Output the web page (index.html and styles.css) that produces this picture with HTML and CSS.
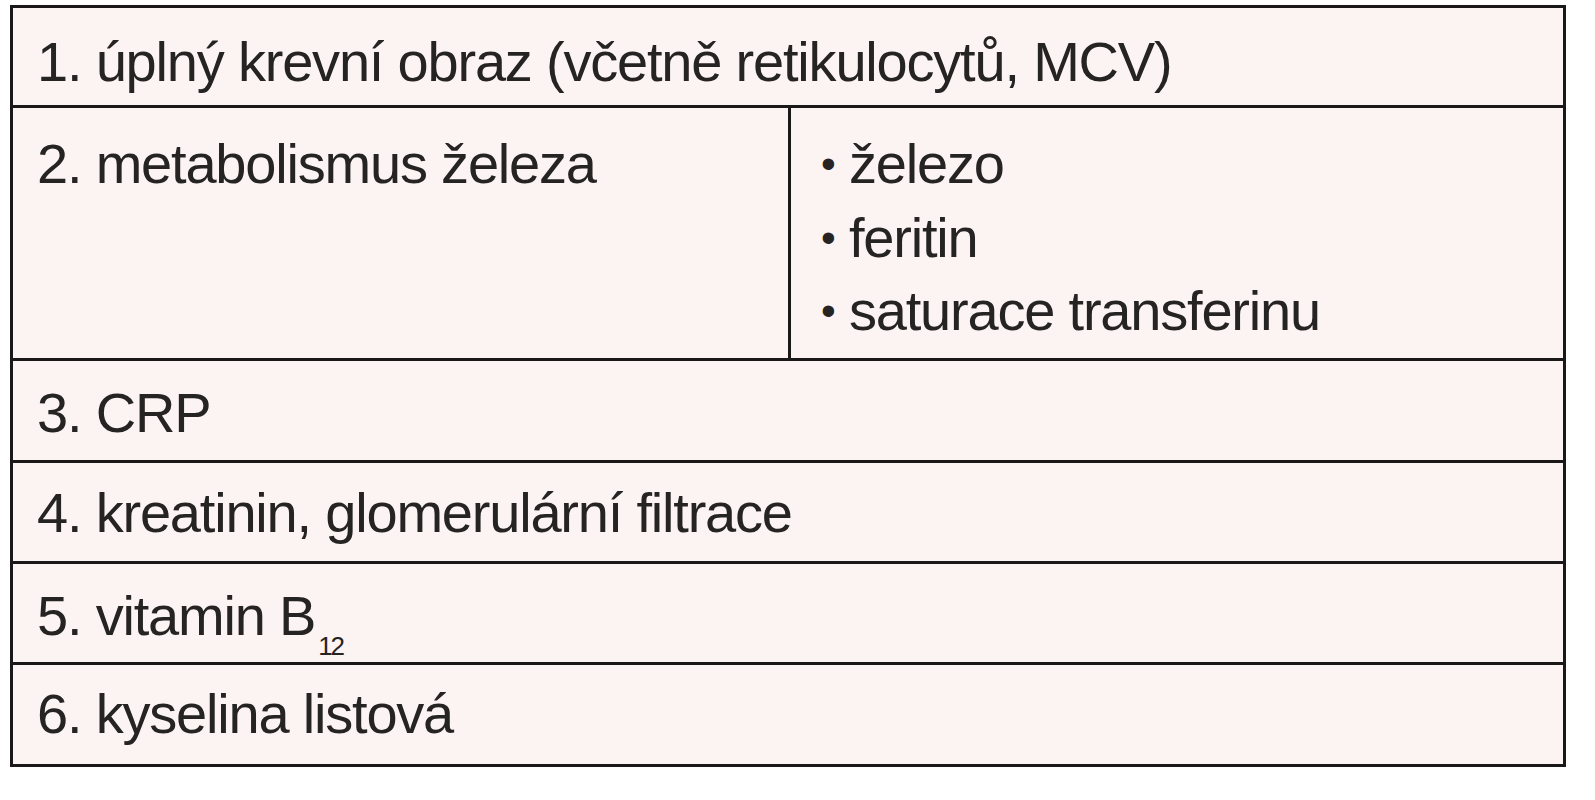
FILE: index.html
```html
<!DOCTYPE html>
<html lang="cs">
<head>
<meta charset="utf-8">
<title>Vyšetření</title>
<link rel="stylesheet" href="styles.css">
</head>
<body>
<div class="table">
  <div class="row r1"><div class="cell">1. úplný krevní obraz (včetně retikulocytů, MCV)</div></div>
  <div class="row r2">
    <div class="cell left">2. metabolismus železa</div>
    <div class="cell right">
      <ul class="bullets">
        <li><span class="dot">•</span>železo</li>
        <li><span class="dot">•</span>feritin</li>
        <li><span class="dot">•</span>saturace transferinu</li>
      </ul>
    </div>
  </div>
  <div class="row r3"><div class="cell">3. CRP</div></div>
  <div class="row r4"><div class="cell">4. kreatinin, glomerulární filtrace</div></div>
  <div class="row r5"><div class="cell">5. vitamin B<span class="sub">12</span></div></div>
  <div class="row r6"><div class="cell">6. kyselina listová</div></div>
</div>
</body>
</html>
```
FILE: styles.css
```css
html, body {
  margin: 0;
  padding: 0;
  background: #ffffff;
}
body {
  padding: 5px 0 0 10px;
  font-family: "Liberation Sans", Arial, sans-serif;
  font-size: 56px;
  line-height: 74px;
  color: #262323;
  letter-spacing: -1.2px;
}
.table {
  width: 1556px;
  box-sizing: border-box;
  border: 3px solid #1a1818;
  background: #fcf4f3;
}
.row {
  display: flex;
  box-sizing: border-box;
}
.row + .row {
  border-top: 3px solid #1a1818;
}
.cell {
  padding: 14px 0 0 24px;
  box-sizing: border-box;
  flex: 1;
}
.r1 { height: 97px; }
.r1 .cell { padding-top: 17px; }
.r2 { height: 253px; }
.r2 .cell { padding-top: 19px; }
.r3 { height: 102px; }
.r4 { height: 101px; }
.r5 { height: 101px; }
.r6 { height: 102px; }
.r3 .cell { padding-top: 15px; }
.r4 .cell { padding-top: 13px; }
.r5 .cell { padding-top: 15px; }
.r6 .cell { padding-top: 12px; }
.left {
  flex: 0 0 778px;
  border-right: 3px solid #1a1818;
}
.right {
  padding-left: 22px;
}
.bullets {
  list-style: none;
  margin: 0;
  padding: 0;
  line-height: 73.5px;
}
.bullets li {
  display: flex;
}
.dot {
  width: 36px;
  flex: 0 0 36px;
  padding-left: 8px;
  box-sizing: border-box;
  font-size: 42px;
}
.sub {
  display: inline-block;
  font-size: 26px;
  letter-spacing: -2px;
  vertical-align: -20px;
  line-height: 0;
  margin-left: 3px;
}
```
